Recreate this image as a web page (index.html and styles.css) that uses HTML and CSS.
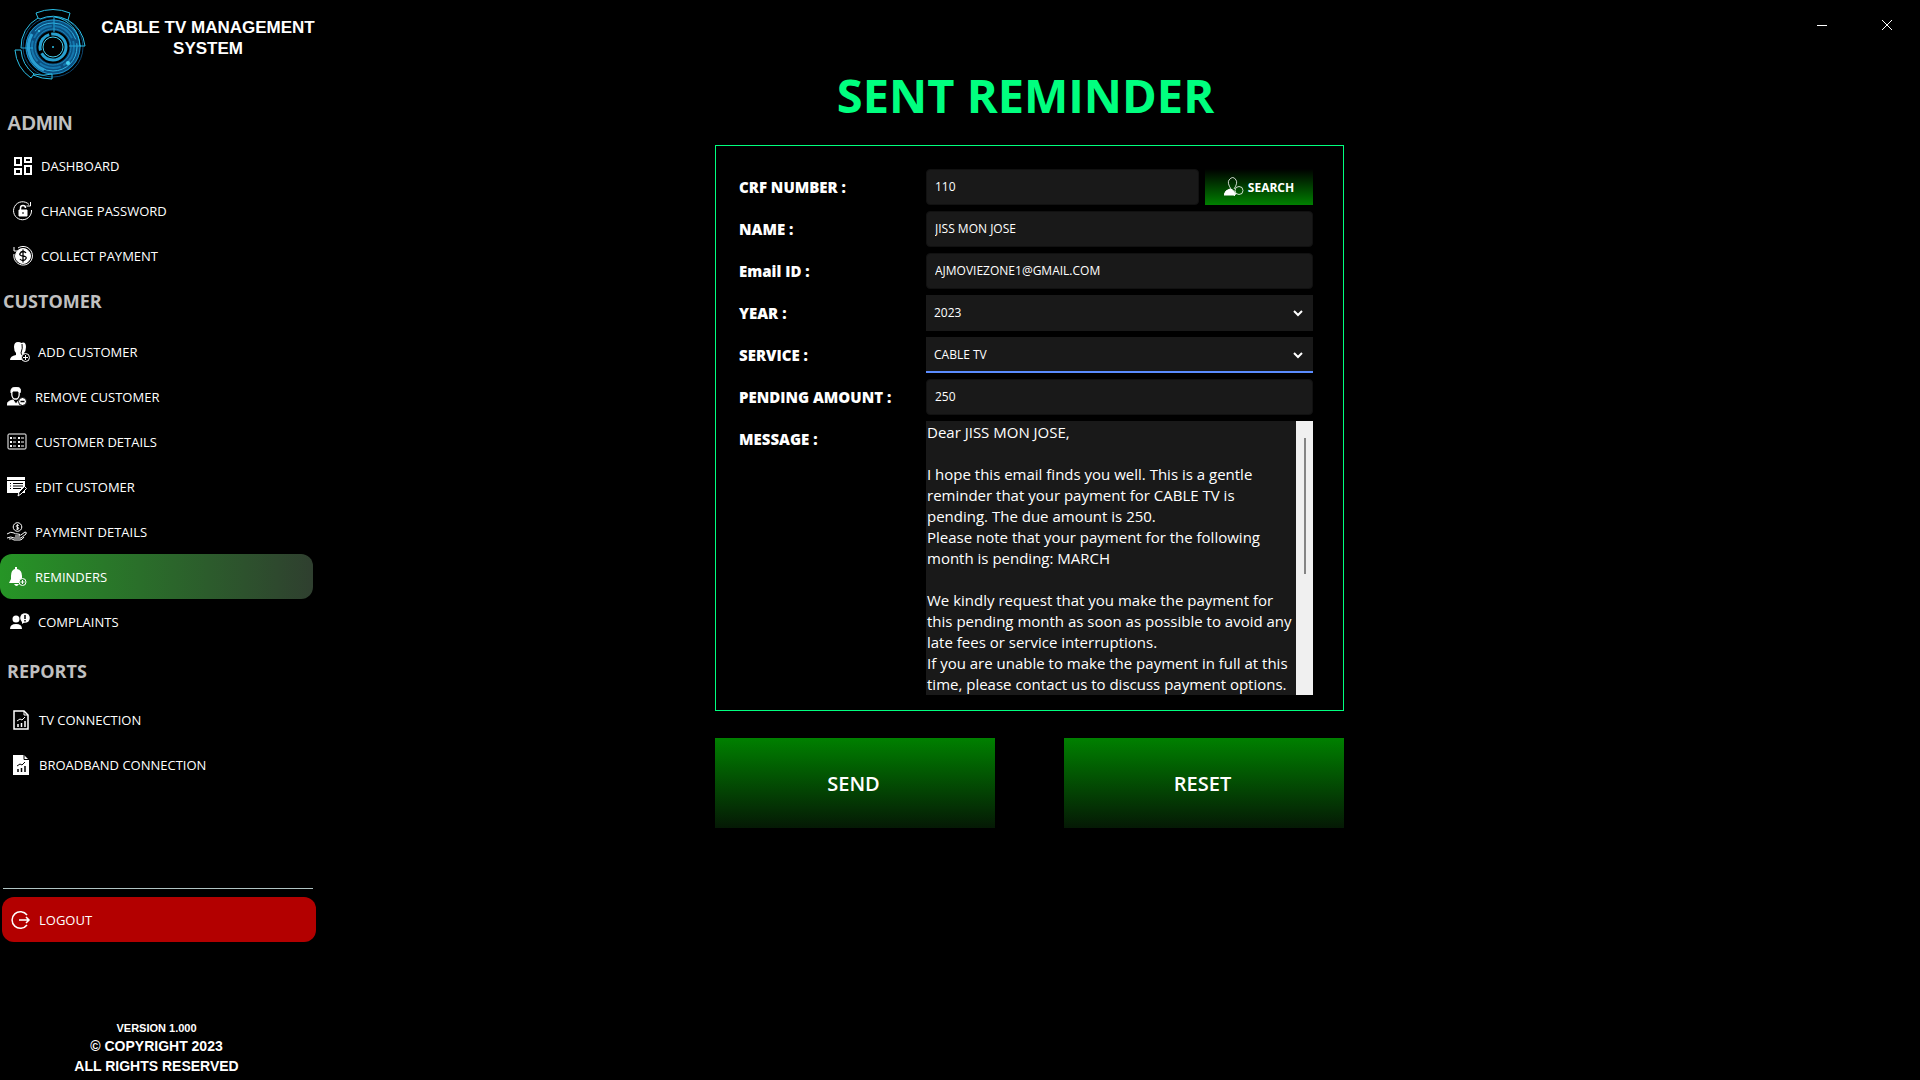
FILE: index.html
```html
<!DOCTYPE html>
<html lang="en">
  <head>
    <meta charset="UTF-8" />
    <meta name="viewport" content="width=device-width, initial-scale=1.0" />
    <title>Cable TV Management System</title>
    <link rel="stylesheet" href="styles.css">
  </head>
  <body>
    <div class="app">
      <aside class="sidebar">
        <div class="brand">
          <svg class="logo" viewBox="0 0 76 76" fill="none" stroke="#22a7d8">
            <circle cx="39" cy="38" r="22" stroke="#0b4f80" stroke-width="11" />
            <circle cx="39" cy="38" r="30" stroke="#0d4670" />
            <circle cx="39" cy="38" r="27" stroke="#1d8fc4" />
            <circle cx="39" cy="38" r="24" stroke="#2fb3e3" stroke-dasharray="50 4 30 8" />
            <circle cx="39" cy="38" r="21" stroke="#1577ad" stroke-width="2" stroke-dasharray="22 3" />
            <circle cx="39" cy="38" r="18" stroke="#1c86ba" />
            <circle cx="39" cy="38" r="13" stroke="#27a0d0" stroke-width="3" stroke-dasharray="34 3 20 2" />
            <circle cx="39" cy="38" r="10" stroke="#46d0f0" />
            <path d="M18 25A25 25 0 0 0 30 61" stroke="#2a9fd2" stroke-width="3" />
            <path d="M40 8V23M7 39h12M55 37h12" />
            <path d="M24 9l-2-5Q39-3 56 4l-2 7Q39 4 26 10L24 9A33 33 0 0 0 7 39M41 8A30 30 0 0 1 66 37h5A35 35 0 0 0 54 11M1 41h6A33 33 0 0 0 20 65L17 69A38 38 0 0 1 1 41M20 65A33 33 0 0 0 38 65v5Q28 70 19 66" stroke="#2cbfe6" />
            <circle cx="39" cy="38" r="1" fill="#2cbfe6" stroke="none" />
            <circle cx="54" cy="54" r="2" fill="#46d0f0" stroke="none" />
            <circle cx="25" cy="22" r="1" fill="#46d0f0" stroke="none" />
          </svg>
          <h1>CABLE TV MANAGEMENT SYSTEM</h1>
        </div>

        <nav>
          <section class="group admin">
            <h2>ADMIN</h2>
            <a href="#">
              <svg viewBox="0 0 20 20" fill="none" stroke="#fff" stroke-width="2"><path d="M2 2h6v7H2zM12 2h6v4h-6zM2 13h6v5H2zM12 10h6v8h-6z" /></svg>
              DASHBOARD
            </a>
            <a href="#">
              <svg viewBox="0 0 20 20" fill="none" stroke="#fff"><path d="M18.500 9A9 9 0 1 1 16 3.500M17.500 1v4h-4" /><path d="M6 9h8v6H6z" fill="#fff" /><path d="M7.500 9V7a2.500 2.500 0 0 1 5 0" stroke-width="1.500" /><path d="M10 11v2" stroke="#000" /></svg>
              CHANGE PASSWORD
            </a>
            <a href="#">
              <svg viewBox="0 0 20 20" fill="none" stroke="#fff"><circle cx="10" cy="10" r="7.500" fill="#fff" /><path d="M5 2A9.300 9.300 0 1 1 1 8M1 1v4h5" /><path d="M13 7Q12 5.500 10 5.500T7 7.500T10 10T13 12.500T10 14.500T7 13M10 3.500v13" stroke="#000" stroke-width="1.300" /></svg>
              COLLECT PAYMENT
            </a>
          </section>

          <section class="group customer">
            <h2>CUSTOMER</h2>
            <a href="#" class="inset">
              <svg viewBox="0 0 20 20" fill="#fff"><path d="M4 5Q4 0 8 0Q11 0 11 1Q16-1 16 5Q16 9 14 11l1 2q4 1 4 5H0q0-4 6-5v-2Q4 9 4 5" /><path d="M12 2q1 4-1 9l1 2 2 2" fill="none" stroke="#000" /><circle cx="15.500" cy="15.500" r="4" fill="#000" stroke="#fff" /><path d="M15.500 13v5M13 15.500h5" stroke="#fff" /></svg>
              ADD CUSTOMER
            </a>
            <a href="#">
              <svg viewBox="0 0 20 20" fill="none" stroke="#fff"><path d="M5 5Q4 10 7 12h3q3-2 2-7" stroke-width="1.300" /><path d="M4 6Q3 0 9 0t4 6l-2-2H6z" fill="#fff" /><path d="M0 18q0-4 6-5l3 4 3-4q2 1 2 5z" fill="#fff" /><circle cx="15.500" cy="14.500" r="4" fill="#fff" stroke="#000" /><path d="M13.500 14.500h4" stroke="#000" stroke-width="1.500" /></svg>
              REMOVE CUSTOMER
            </a>
            <a href="#">
              <svg viewBox="0 0 20 20" fill="none" stroke="#fff"><rect x="1" y="2" width="18" height="15" rx="1" /><path d="M3 6h2M3 10h2M3 14h2M11 6h2M11 10h2M11 14h2" stroke-width="2" /><path d="M6 6h3M6 10h3M6 14h3M14 6h3M14 10h3M14 14h3" /></svg>
              CUSTOMER DETAILS
            </a>
            <a href="#">
              <svg viewBox="0 0 20 20" fill="none"><path d="M0 0h18v3H0zM0 4h18v12H0z" fill="#fff" /><path d="M3 6.500h1M6 6.500h10M3 9h1M6 9h10M3 11.500h1M6 11.500h8" stroke="#000" /><path d="M11 19l1-4 5.500-5.500 2 2L14 17z" fill="#000" stroke="#fff" /></svg>
              EDIT CUSTOMER
            </a>
            <a href="#">
              <svg viewBox="0 0 20 20" fill="none" stroke="#fff"><circle cx="10.500" cy="5" r="4.300" /><path d="M12 3.500q-3-1-3 .5t3 2q0 2-3 1M10.500 2v6" stroke-width=".8" /><path d="M0 12q4-3 7-1 1 1 4 1t2 2H8M14 13l4-3q2 0 1 2l-5 4H7q-3-2-7 0M2 17q3-1 5 1h6q2 0 4-3" /></svg>
              PAYMENT DETAILS
            </a>
            <a href="#" class="active" aria-current="page">
              <svg viewBox="0 0 20 20" fill="#fff"><path d="M8 2V0h2v2q5 1 5 7v3l2 4H2l2-4V9q0-6 4-7M7 17h5q-2.500 4-5 0" /><circle cx="15.500" cy="15" r="3.500" fill="#27862a" stroke="#fff" /><path d="M15.500 13v4M13.500 15h4" stroke="#fff" /></svg>
              REMINDERS
            </a>
            <a href="#" class="inset">
              <svg viewBox="0 0 20 20" fill="#fff"><circle cx="6" cy="7" r="3.500" /><path d="M0 17q0-5 6-5t6 5z" /><circle cx="15" cy="6" r="4.800" /><path d="M12 9v3l3-2" /><path d="M15 3v4M15 8v1.500" stroke="#000" stroke-width="1.500" /></svg>
              COMPLAINTS
            </a>
          </section>

          <section class="group reports">
            <h2>REPORTS</h2>
            <a href="#">
              <svg viewBox="0 0 20 20" fill="none" stroke="#fff"><path d="M3 1h10l4 4v14H3z" stroke-width="1.500" /><path d="M13 1v4h4M6 11l3-2 2 1 3-3" /><path d="M7 17v-3M10.500 17v-4M14 17v-6" stroke-width="1.500" /></svg>
              TV CONNECTION
            </a>
            <a href="#">
              <svg viewBox="0 0 20 20" fill="none" stroke="#000"><path d="M2 0h11l5 5v15H2z" fill="#fff" stroke="none" /><path d="M13 0v4.500h5M6 11l3-2 2 1 3-3" /><path d="M7 17v-3M10.500 17v-4M14 17v-6" stroke-width="1.500" /></svg>
              BROADBAND CONNECTION
            </a>
          </section>
        </nav>

        <hr>
        <button type="button" class="logout">
          <svg viewBox="0 0 20 20" fill="none" stroke="#fff" stroke-width="1.500"><path d="M16 5A8.300 8.300 0 1 0 16 15M8 10h10M15 7l3 3-3 3" /></svg>
          LOGOUT
        </button>

        <footer>
          <small>VERSION 1.000</small>
          <p>© COPYRIGHT 2023</p>
          <p>ALL RIGHTS RESERVED</p>
        </footer>
      </aside>

      <main>
        <div class="window-bar">
          <button type="button" aria-label="Minimize"><svg viewBox="0 0 10 10" stroke="#fff"><path d="M0 5.500h10" /></svg></button>
          <button type="button" aria-label="Close"><svg viewBox="0 0 10 10" stroke="#fff"><path d="M0 0l10 10M10 0L0 10" /></svg></button>
        </div>

        <form class="reminder">
          <h2>SENT REMINDER</h2>
          <div class="panel">
            <label for="crf">CRF NUMBER :</label>
            <div class="search-row">
              <input type="text" id="crf" value="110">
              <button type="button" class="search">
                <svg viewBox="0 0 20 20" fill="none" stroke="#fff"><path d="M7 12Q3 6 5 3q4-5 7 0 2 3-2 9" stroke-width=".8" /><path d="M0 18q1-5 6-6 5 1 5 6z" fill="#fff" /><circle cx="15" cy="13.500" r="4" stroke-width=".8" /><path d="M12 16l-2 3" /></svg>
                SEARCH
              </button>
            </div>
            <label for="name">NAME :</label>
            <input type="text" id="name" value="JISS MON JOSE">
            <label for="email">Email ID :</label>
            <input type="text" id="email" value="AJMOVIEZONE1@GMAIL.COM">
            <label for="year">YEAR :</label>
            <div class="select">
              <select id="year"><option>2023</option></select>
              <svg viewBox="0 0 10 8" fill="none" stroke="#fff" stroke-width="2"><path d="M1 2l4 4 4-4" /></svg>
            </div>
            <label for="service">SERVICE :</label>
            <div class="select focused">
              <select id="service"><option>CABLE TV</option></select>
              <svg viewBox="0 0 10 8" fill="none" stroke="#fff" stroke-width="2"><path d="M1 2l4 4 4-4" /></svg>
            </div>
            <label for="amount">PENDING AMOUNT :</label>
            <input type="text" id="amount" value="250">
            <label for="message">MESSAGE :</label>
            <div class="message">
              <textarea id="message">Dear JISS MON JOSE,

I hope this email finds you well. This is a gentle
reminder that your payment for CABLE TV is
pending. The due amount is 250.
Please note that your payment for the following
month is pending: MARCH

We kindly request that you make the payment for
this pending month as soon as possible to avoid any
late fees or service interruptions.
If you are unable to make the payment in full at this
time, please contact us to discuss payment options.</textarea>
              <div class="scrollbar"><div class="thumb"></div></div>
            </div>
          </div>
          <div class="actions">
            <button type="submit">SEND</button>
            <button type="reset">RESET</button>
          </div>
        </form>
      </main>
    </div>
  </body>
</html>
```
FILE: styles.css
```css
* {
  margin: 0;
  padding: 0;
  box-sizing: border-box;
}
body {
  background: #000;
  color: #fff;
  font-family: "Open Sans", "Noto Sans", sans-serif;
}
button,
input,
select,
textarea {
  font-family: inherit;
  color: #fff;
  border: 0;
  outline: 0;
}
button {
  background: none;
  cursor: pointer;
}
.app {
  display: grid;
  grid-template-columns: 318px 1fr;
  min-height: 100vh;
}

/* sidebar */
.sidebar {
  display: flex;
  flex-direction: column;
}
.brand {
  display: flex;
  gap: 8px;
  height: 110px;
  padding: 9px 0 0 14px;
}
.logo {
  flex: none;
  width: 76px;
  height: 76px;
  overflow: visible;
}
.brand h1 {
  flex: 1;
  padding-top: 8px;
  font: bold 17px/21px "Liberation Sans", Arial, sans-serif;
  text-align: center;
}
.group h2 {
  color: #c0c0c0;
  font-size: 18px;
  line-height: 26px;
}
.group a,
.logout {
  display: flex;
  align-items: center;
  gap: 8px;
  height: 45px;
  margin-right: 5px;
  border-radius: 12px;
  color: #fff;
  font-size: 13px;
  font-weight: 500;
  text-decoration: none;
}
.group svg,
.logout svg {
  flex: none;
  width: 20px;
  height: 20px;
}
.admin h2 {
  padding-left: 7px;
  margin-bottom: 7px;
  font-family: "Liberation Sans", Arial, sans-serif;
  font-size: 20px;
}
.admin a {
  padding-left: 13px;
}
.customer {
  padding-top: 10px;
}
.customer h2 {
  padding-left: 3px;
  margin-bottom: 15px;
}
.customer a {
  padding-left: 7px;
}
.customer .inset {
  padding-left: 10px;
}
.customer .active {
  background: linear-gradient(to right, #269526, #2f3f2f);
}
.reports {
  padding-top: 14px;
}
.reports h2 {
  padding-left: 7px;
  margin-bottom: 13px;
}
.reports a {
  padding-left: 11px;
}
hr {
  margin: 101px 5px 8px 3px;
  border: 0;
  border-top: 1px solid #b0c4c4;
}
.logout {
  margin: 0 2px;
  padding-left: 9px;
  background: #b30000;
}
footer {
  margin-top: auto;
  padding: 0 5px 4px 0;
  font: bold 14px/20px "Liberation Sans", Arial, sans-serif;
  text-align: center;
}
footer small {
  display: block;
  font-size: 11px;
  line-height: 16px;
}

/* main area */
.window-bar {
  display: flex;
  justify-content: flex-end;
  gap: 19px;
  height: 50px;
  padding-right: 10px;
}
.window-bar button {
  width: 46px;
}
.window-bar svg {
  width: 10px;
  height: 10px;
}
.reminder {
  width: 629px;
  max-width: 100%;
  margin-left: 397px;
}
.reminder h2 {
  padding: 5px 8px 10px 0;
  color: #00ff7f;
  font-size: 47px;
  line-height: 80px;
  text-align: center;
}
.panel {
  display: grid;
  grid-template-columns: 187px 1fr;
  grid-auto-rows: minmax(36px, auto);
  gap: 6px 0;
  padding: 23px 30px 15px 23px;
  border: 1px solid #00ff7f;
}
.panel label {
  font-size: 15px;
  font-weight: 800;
  line-height: 36px;
}
.panel input,
.panel select {
  width: 100%;
  min-width: 0;
  height: 36px;
  padding: 0 8px 2px;
  background: #191919;
  border: 1px solid #111;
  border-radius: 4px;
  font-size: 12px;
}
.search-row {
  display: flex;
  gap: 6px;
}
.search {
  display: flex;
  flex: none;
  align-items: center;
  justify-content: center;
  gap: 4px;
  width: 108px;
  background: linear-gradient(#000, #008000);
  font-size: 12px;
  font-weight: 700;
}
.search svg {
  width: 20px;
  height: 20px;
}
.select {
  display: grid;
  align-items: center;
  height: 36px;
  background: #191919;
}
.select select,
.select svg {
  grid-area: 1 / 1;
}
.panel select {
  appearance: none;
  border: 0;
  border-radius: 0;
  background: none;
}
.select svg {
  justify-self: end;
  width: 10px;
  height: 8px;
  margin-right: 10px;
  pointer-events: none;
}
.focused {
  box-shadow: inset 0 -2px #5b8cff;
}
.message {
  display: flex;
  height: 274px;
}
.message textarea {
  flex: 1;
  min-width: 0;
  padding: 1px 0 0 1px;
  background: #191919;
  font-size: 15px;
  line-height: 21px;
  white-space: pre;
  overflow: hidden;
  resize: none;
}
.scrollbar {
  width: 17px;
  padding: 17px 7px 0 8px;
  background: #f0f0f0;
}
.thumb {
  height: 53%;
  background: #858585;
}
.actions {
  display: grid;
  grid-template-columns: 1fr 1fr;
  gap: 69px;
  margin-top: 27px;
}
.actions button {
  height: 90px;
  padding: 1px 3px 0 0;
  background: linear-gradient(#008000, #051905);
  font-size: 20px;
  font-weight: 600;
}
```
